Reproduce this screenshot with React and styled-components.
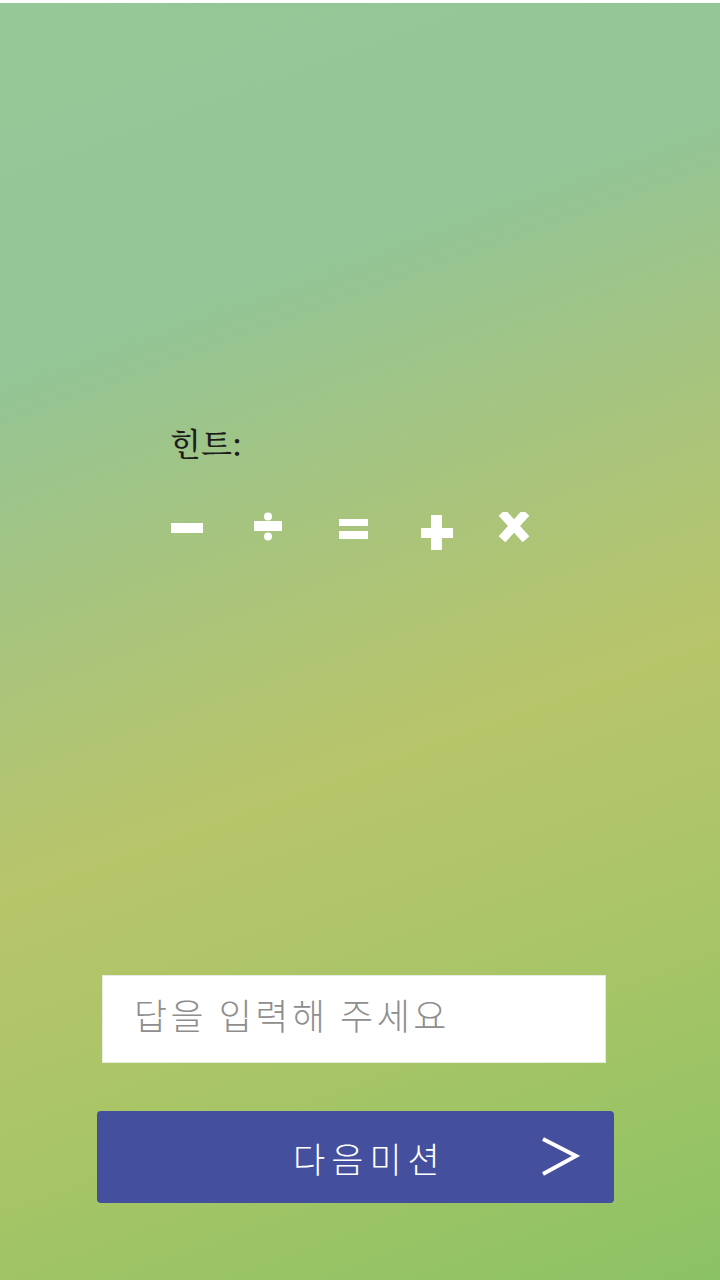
import React from 'react';
import styled, { createGlobalStyle } from 'styled-components';

const GlobalStyle = createGlobalStyle`
  html, body {
    margin: 0;
    padding: 0;
    background: #ffffff;
  }
  * {
    box-sizing: border-box;
  }
`;

const Screen = styled.div`
  margin-top: 3px;
  height: calc(100vh - 3px);
  display: flex;
  flex-direction: column;
  background: linear-gradient(
    160deg,
    #95c797 0%,
    #93c596 24%,
    #a6c47f 40%,
    #b8c56a 58%,
    #a6c566 78%,
    #8bc265 100%
  );
  font-family: "Noto Sans CJK KR", "Noto Sans", sans-serif;
`;

const HintArea = styled.section`
  padding: 416px 0 0 170px;
`;

const HintLabel = styled.h2`
  margin: 0;
  font-family: "Noto Serif CJK KR", "Liberation Serif", "Noto Sans CJK KR", serif;
  font-size: 32px;
  font-weight: 500;
  line-height: 46px;
  color: #1c1c1c;
`;

const SymbolRow = styled.div`
  display: flex;
  align-items: flex-start;
  margin-top: 47px;
`;

const Symbol = styled.svg`
  width: 34px;
  height: 40px;
  margin-left: ${(p) => p.$offset || 0}px;
  fill: #ffffff;
  flex-shrink: 0;
`;

const Spacer = styled.div`
  flex: 1;
`;

const Form = styled.form`
  display: flex;
  flex-direction: column;
  padding: 0 0 77px 97px;
`;

const AnswerInput = styled.input`
  margin-left: 5px;
  width: 504px;
  height: 88px;
  border: 1px solid #e6ece0;
  background: #ffffff;
  padding: 0 0 10px 31px;
  font-family: "Noto Sans CJK KR", "Noto Sans", sans-serif;
  font-size: 36px;
  font-weight: 300;
  letter-spacing: 3.5px;
  color: #333;
  outline: none;

  &::placeholder {
    color: #8e8e8e;
  }
`;

const NextButton = styled.button`
  margin-top: 48px;
  width: 517px;
  height: 92px;
  border: none;
  border-radius: 4px;
  background: #444f9e;
  display: flex;
  align-items: center;
  padding: 0 34px 0 196px;
  cursor: pointer;
`;

const ButtonLabel = styled.span`
  flex: 1;
  text-align: left;
  font-family: "Noto Sans CJK KR", "Noto Sans", sans-serif;
  font-size: 35px;
  font-weight: 300;
  letter-spacing: 6px;
  color: #ffffff;
`;

const Chevron = styled.svg`
  width: 40px;
  height: 44px;
  stroke: #ffffff;
  fill: none;
`;

export default function App() {
  return (
    <>
      <GlobalStyle />
      <Screen>
        <HintArea>
          <HintLabel>힌트:</HintLabel>
          <SymbolRow>
            <Symbol viewBox="0 0 34 40">
              <rect x="1" y="11" width="32" height="10" />
            </Symbol>
            <Symbol viewBox="0 0 34 40" $offset={48}>
              <rect x="2" y="9" width="28" height="10" />
              <circle cx="16" cy="4.5" r="4" />
              <circle cx="16" cy="24.5" r="4" />
            </Symbol>
            <Symbol viewBox="0 0 34 40" $offset={51}>
              <rect x="2" y="7" width="29" height="7" />
              <rect x="2" y="19" width="29" height="8" />
            </Symbol>
            <Symbol viewBox="0 0 34 40" $offset={49}>
              <rect x="11" y="3" width="11" height="35" />
              <rect x="1" y="16" width="32" height="10" />
            </Symbol>
            <Symbol viewBox="0 0 34 40" $offset={44}>
              <g stroke="#ffffff" strokeWidth="9" strokeLinecap="square">
                <line x1="7" y1="4" x2="25" y2="24" />
                <line x1="25" y1="4" x2="7" y2="24" />
              </g>
            </Symbol>
          </SymbolRow>
        </HintArea>
        <Spacer />
        <Form onSubmit={(e) => e.preventDefault()}>
          <AnswerInput type="text" placeholder="답을 입력해 주세요" />
          <NextButton type="submit">
            <ButtonLabel>다음미션</ButtonLabel>
            <Chevron viewBox="0 0 40 44">
              <polyline points="3,4 36,21 3,39" strokeWidth="4" />
            </Chevron>
          </NextButton>
        </Form>
      </Screen>
    </>
  );
}
